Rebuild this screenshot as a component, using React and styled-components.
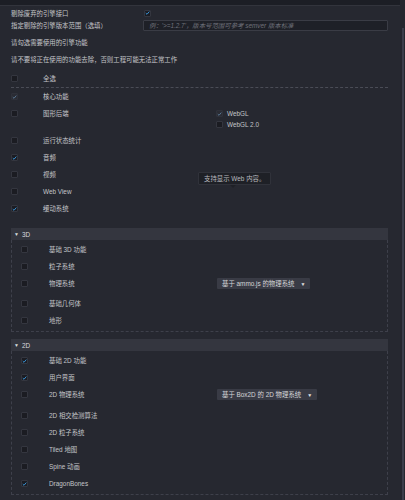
import React from "react"
import styled, { createGlobalStyle, css } from "styled-components"

const GlobalStyle = createGlobalStyle`
  html, body {
    margin: 0;
    padding: 0;
    background: #262830;
  }
  body {
    font-family: "Liberation Sans", "Noto Sans CJK SC", sans-serif;
    font-size: 6.4px;
    color: #c4c5c9;
  }
`

const Page = styled.div`
  display: flex;
  width: 405px;
  height: 500px;
  overflow: hidden;
  background: #262830;
`
const Main = styled.div`
  flex: 1;
  display: flex;
  flex-direction: column;
`
const TopBar = styled.div`
  height: 5px;
  background: #1c1e25;
  border-bottom: 1px solid #32343c;
`
const Content = styled.div`
  padding: 0 12px 0 11px;
  display: flex;
  flex-direction: column;
`
const Scrollbar = styled.div`
  width: 5px;
  display: flex;
  justify-content: center;
  padding-top: 28px;
  background: #24262e;
`
const Thumb = styled.div`
  width: 2px;
  height: 100%;
  background: #3a3d4a;
`

const PropRow = styled.div`
  display: grid;
  grid-template-columns: 132px 1fr;
  align-items: center;
  height: ${p => p.h}px;
`
const Input = styled.div`
  height: 9px;
  background: #1e2027;
  border: 1px solid #3a3c45;
  border-radius: 1px;
  padding-left: 5px;
  display: flex;
  align-items: center;
  color: #6f717a;
  font-style: italic;
`
const Hint = styled.div`
  line-height: 17px;
  margin-top: ${p => p.mt || 0}px;
`
const Divider = styled.div`
  border-bottom: 1px dashed #4a4c56;
`

const Row = styled.div`
  display: grid;
  grid-template-columns: ${p => (p.inner ? "28px 167px 1fr" : "32px 173px 1fr")};
  align-items: start;
  min-height: 17px;
  margin-top: ${p => p.mt || 0}px;
  padding-bottom: ${p => p.pb || 0}px;
`
const Cell = styled.div`
  height: 17px;
  display: flex;
  align-items: center;
`
const SubList = styled.div`
  display: flex;
  flex-direction: column;
  padding-top: 3px;
`
const SubItem = styled.div`
  height: 11px;
  display: flex;
  align-items: center;
  gap: 4px;
`

const Box = styled.span`
  width: 7px;
  height: 7px;
  border-radius: 1px;
  background: #1b1c22;
  border: 1px solid #34363f;
  display: inline-flex;
  align-items: center;
  justify-content: center;
  box-sizing: border-box;
  ${p => p.disabled && css`
    background: #2a2c34;
    border-color: #2f313a;
  `}
`
const Check = ({ on, disabled }) => (
  <Box disabled={disabled}>
    {on && (
      <svg width="6" height="6" viewBox="0 0 10 10">
        <path d="M1.5 5.2 L4 7.6 L8.6 2.2" fill="none" stroke={disabled ? "#5d7e9c" : "#3d9fe6"} strokeWidth="1.8" />
      </svg>
    )}
  </Box>
)

const Select = styled.div`
  display: inline-flex;
  align-items: center;
  gap: 6px;
  height: 11px;
  padding: 0 5px 0 5px;
  background: #393b45;
  border-radius: 1px;
  color: #d4d5d8;
  margin-top: 3px;
  justify-self: start;
  margin-left: 1px;
`
const Caret = styled.span`
  font-size: 5px;
  color: #e0e0e0;
`

const Tooltip = styled.div`
  position: absolute;
  left: -18px;
  top: 6px;
  z-index: 2;
  background: #1e2026;
  border: 1px solid #30323a;
  border-radius: 1px;
  padding: 0 5px;
  height: 11px;
  display: flex;
  align-items: center;
  white-space: nowrap;
  color: #b8b9be;
  &::after {
    content: "";
    position: absolute;
    left: 31px;
    bottom: -4px;
    border-left: 3px solid transparent;
    border-right: 3px solid transparent;
    border-top: 3px solid #1e2026;
  }
`
const TipAnchor = styled.div`
  position: relative;
  height: 17px;
`

const Section = styled.div`
  margin-top: ${p => p.mt}px;
  display: flex;
  flex-direction: column;
`
const SectionHead = styled.div`
  height: 12px;
  background: #34363f;
  display: flex;
  align-items: center;
  gap: 3px;
  padding-left: 3px;
  color: #d9dadd;
`
const Arrow = styled.span`
  font-size: 5px;
`
const SectionBody = styled.div`
  border: 1px dashed #3e404b;
  border-top: none;
  padding: 1px 0 ${p => p.pb}px 9px;
`

const FeatureRow = ({ label, on, disabled, inner, pb, mt, right }) => (
  <Row inner={inner} pb={pb} mt={mt}>
    <Cell><Check on={on} disabled={disabled} /></Cell>
    <Cell>{label}</Cell>
    {right || <div />}
  </Row>
)

export default function App() {
  return (
    <>
      <GlobalStyle />
      <Page>
        <Main>
          <TopBar />
          <Content>
            <PropRow h={14}>
              <div>剔除废弃的引擎接口</div>
              <div style={{ display: "flex", paddingLeft: 1 }}><Check on /></div>
            </PropRow>
            <PropRow h={11}>
              <div>指定剔除的引擎版本范围（选填）</div>
              <Input>例：'&gt;=1.2.7'，版本号范围可参考 semver 版本标准</Input>
            </PropRow>
            <Hint mt={3}>请勾选需要使用的引擎功能</Hint>
            <Hint>请不要将正在使用的功能去除，否则工程可能无法正常工作</Hint>
            <FeatureRow label="全选" mt={2} />
            <Divider />
            <FeatureRow label="核心功能" on disabled />
            <FeatureRow
              label="图形后端"
              pb={2}
              right={
                <SubList>
                  <SubItem><Check on disabled />WebGL</SubItem>
                  <SubItem><Check />WebGL 2.0</SubItem>
                </SubList>
              }
            />
            <FeatureRow label="运行状态统计" />
            <FeatureRow label="音频" on />
            <FeatureRow
              label="视频"
              right={
                <TipAnchor>
                  <Tooltip>支持显示 Web 内容。</Tooltip>
                </TipAnchor>
              }
            />
            <FeatureRow label="Web View" />
            <FeatureRow label="缓动系统" on />

            <Section mt={11}>
              <SectionHead><Arrow>▼</Arrow>3D</SectionHead>
              <SectionBody pb={2}>
                <FeatureRow inner label="基础 3D 功能" />
                <FeatureRow inner label="粒子系统" />
                <FeatureRow
                  inner
                  label="物理系统"
                  pb={3}
                  right={<Select>基于 ammo.js 的物理系统<Caret>▼</Caret></Select>}
                />
                <FeatureRow inner label="基础几何体" />
                <FeatureRow inner label="地形" />
              </SectionBody>
            </Section>

            <Section mt={7}>
              <SectionHead><Arrow>▼</Arrow>2D</SectionHead>
              <SectionBody pb={2}>
                <FeatureRow inner label="基础 2D 功能" on />
                <FeatureRow inner label="用户界面" on />
                <FeatureRow
                  inner
                  label="2D 物理系统"
                  pb={4}
                  right={<Select>基于 Box2D 的 2D 物理系统<Caret>▼</Caret></Select>}
                />
                <FeatureRow inner label="2D 相交检测算法" />
                <FeatureRow inner label="2D 粒子系统" />
                <FeatureRow inner label="Tiled 地图" />
                <FeatureRow inner label="Spine 动画" />
                <FeatureRow inner label="DragonBones" on />
              </SectionBody>
            </Section>
          </Content>
        </Main>
        <Scrollbar><Thumb /></Scrollbar>
      </Page>
    </>
  )
}
